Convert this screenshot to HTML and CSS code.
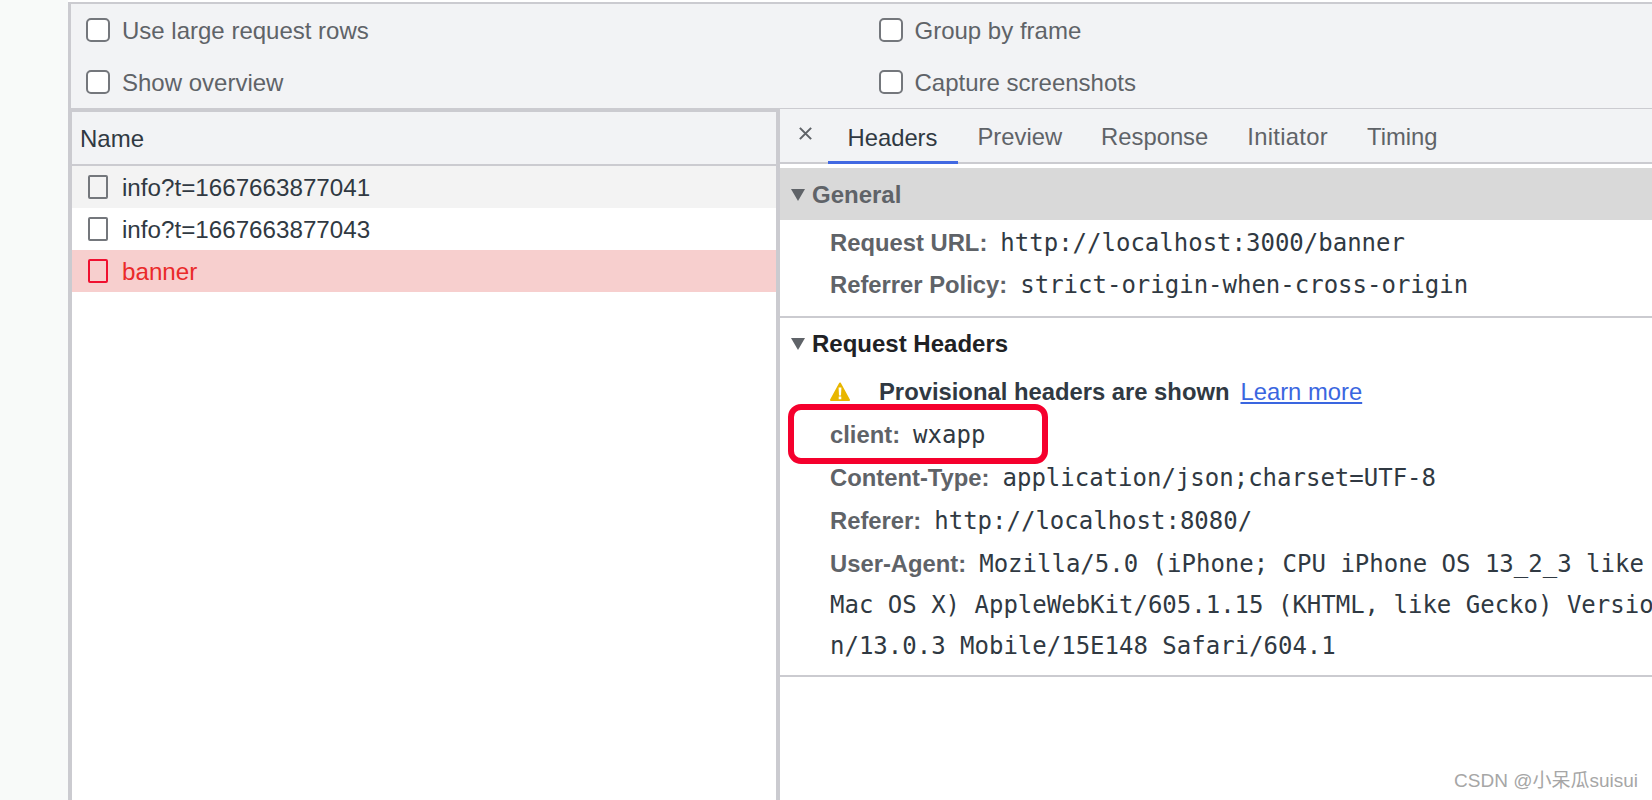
FILE: index.html
```html
<!DOCTYPE html>
<html lang="en">
<head>
<meta charset="utf-8">
<title>Network panel</title>
<link rel="stylesheet" href="styles.css">
</head>
<body>
<div class="page">
  <aside class="strip"></aside>
  <main class="devtools">
    <section class="settings">
      <div class="settings-col">
        <label class="check"><span class="box"></span>Use large request rows</label>
        <label class="check"><span class="box"></span>Show overview</label>
      </div>
      <div class="settings-col">
        <label class="check"><span class="box"></span>Group by frame</label>
        <label class="check"><span class="box"></span>Capture screenshots</label>
      </div>
    </section>
    <section class="panes">
      <div class="list">
        <div class="list-head">Name</div>
        <div class="req req-alt"><span class="file"></span>info?t=1667663877041</div>
        <div class="req"><span class="file"></span>info?t=1667663877043</div>
        <div class="req req-err"><span class="file"></span>banner</div>
      </div>
      <div class="detail">
        <nav class="tabs">
          <svg class="close" width="16" height="16" viewBox="0 0 16 16"><path d="M2 2l12 12M14 2L2 14" stroke="#5f6368" stroke-width="2.2" fill="none"/></svg>
          <span class="tab tab-on">Headers</span>
          <span class="tab">Preview</span>
          <span class="tab">Response</span>
          <span class="tab tab-spaced">Initiator</span>
          <span class="tab">Timing</span>
        </nav>
        <div class="block block-general">
          <h3 class="sec sec-on"><span class="tri"></span>General</h3>
          <div class="kv kv-tight"><b>Request URL:</b><code>http://localhost:3000/banner</code></div>
          <div class="kv kv-tight"><b>Referrer Policy:</b><code>strict-origin-when-cross-origin</code></div>
        </div>
        <div class="block block-req">
          <h3 class="sec"><span class="tri"></span>Request Headers</h3>
          <div class="kv warn">
            <svg class="warn-ic" width="20" height="20" viewBox="0 0 20 20"><path d="M10 1.500L19 18H1z" fill="#e8b600" stroke="#e8b600" stroke-width="2" stroke-linejoin="round"/><path d="M8.600 5.500h2.800l-.4 8H9zM8.700 14.600h2.600v2.600H8.700z" fill="#fff"/></svg>
            <strong>Provisional headers are shown</strong><a class="more" href="#">Learn more</a>
          </div>
          <div class="kv"><b>client:</b><code>wxapp</code></div>
          <div class="kv"><b>Content-Type:</b><code>application/json;charset=UTF-8</code></div>
          <div class="kv"><b>Referer:</b><code>http://localhost:8080/</code></div>
          <div class="kv kv-wrap"><b>User-Agent:</b><code>Mozilla/5.0 (iPhone; CPU iPhone OS 13_2_3 like<br>Mac OS X) AppleWebKit/605.1.15 (KHTML, like Gecko) Versio<br>n/13.0.3 Mobile/15E148 Safari/604.1</code></div>
        </div>
      </div>
    </section>
  </main>
</div>
<div class="callout"></div>
<div class="mark">CSDN @小呆瓜suisui</div>
</body>
</html>
```
FILE: styles.css
```css
* { box-sizing: border-box; }
html, body { margin: 0; height: 100%; overflow: hidden; background: #fff; }
body { font-family: "Liberation Sans", Arial, sans-serif; font-size: 24px; color: #303942; }
.page { display: flex; width: 1652px; height: 800px; }
.strip { width: 68px; flex: none; background: #f8faf9; }
.devtools { flex: 1; min-width: 0; display: flex; flex-direction: column; padding-top: 2px; background: #fff; }

.settings { height: 110px; flex: none; display: flex; background: #f2f3f5; border-top: 2px solid #cbcbd0; border-left: 3px solid #cbcbd0; border-bottom: 4px solid #cbcbd0; padding-left: 15px; }
.settings-col { width: 792px; display: flex; flex-direction: column; gap: 1px; }
.settings-col:first-child { width: 792.500px; flex: none; }
.check { display: flex; align-items: center; height: 51px; color: #5f6368; padding-top: 2px; }
.box { width: 24px; height: 24px; border: 2px solid #74777c; border-radius: 5px; background: #fff; margin-right: 12px; flex: none; margin-top: -2px; }

.panes { flex: 1; display: flex; min-height: 0; margin-top: -3px; }
.list { width: 712px; flex: none; border-left: 4px solid #cbcbd0; border-right: 4px solid #cbcbd0; margin-top: 3px; }
.list-head { height: 54px; display: flex; align-items: center; padding-left: 8px; padding-top: 2px; background: #f2f3f5; border-bottom: 2px solid #cbcbd0; }
.req { height: 42px; display: flex; align-items: center; padding-left: 16px; font-size: 24.200px; padding-top: 1px; }
.req-alt { background: #f3f3f3; }
.req-err { background: #f7cfce; color: #ea2a2a; }
.file { width: 20px; height: 24px; border: 2px solid #74777c; border-radius: 2px; background: transparent; margin-right: 14px; flex: none; margin-top: -1px; }
.req-err .file { border-color: #f01030; }

.detail { flex: 1; min-width: 0; }
.tabs { height: 55px; display: flex; align-items: flex-end; background: #f2f3f5; border-bottom: 2px solid #cbcbd0; padding-left: 18px; font-size: 23.800px; }
.close { width: 15px; height: 15px; align-self: center; margin-right: 15px; margin-top: -4px; flex: none; }
.tab { height: 53px; padding: 3px 19.500px 0; display: flex; align-items: center; color: #5f6368; }
.tab-on { color: #303942; border-bottom: 3px solid #4269e2; margin-bottom: -2px; height: 54px; padding: 5px 20.500px 0 19.500px; }
.tab-spaced { letter-spacing: 0.3px; }

.block { border-bottom: 2px solid #cbcbd0; }
.block-general { padding-top: 4px; height: 154px; }
.block-req { height: 359px; }
.sec { margin: 0; height: 52px; display: flex; align-items: center; padding-left: 11px; font-size: 24px; font-weight: bold; color: #202124; }
.sec-on { background: #d9d9d9; color: #5f6368; margin-bottom: 2px; padding-top: 2px; }
.tri { width: 0; height: 0; border-left: 7px solid transparent; border-right: 7px solid transparent; border-top: 12px solid #5f6368; margin-right: 7px; }
.kv { padding-left: 50px; height: 43px; line-height: 43px; white-space: nowrap; color: #303942; font-size: 23.800px; }
.kv-tight { height: 42px; line-height: 42px; }
.kv b { color: #5f6368; margin-right: 13px; }
.kv code { font-family: "DejaVu Sans Mono", "Liberation Mono", monospace; font-size: 24px; }
.kv-wrap { line-height: 41px; height: auto; padding-top: 1px; }
.kv-wrap code { line-height: 1; }
.warn { display: flex; align-items: center; }
.warn-ic { margin-right: 29px; flex: none; }
.warn strong { color: #303942; margin-right: 11px; }
.more { color: #3a66e0; }

.callout { position: absolute; left: 788px; top: 404px; width: 260px; height: 60px; border: 6px solid #f5002d; border-radius: 13px; }
.mark { position: absolute; right: 14px; bottom: 8px; font-size: 19px; color: #a6a6a6; font-family: "Liberation Sans", "Noto Sans CJK SC", sans-serif; }
```
